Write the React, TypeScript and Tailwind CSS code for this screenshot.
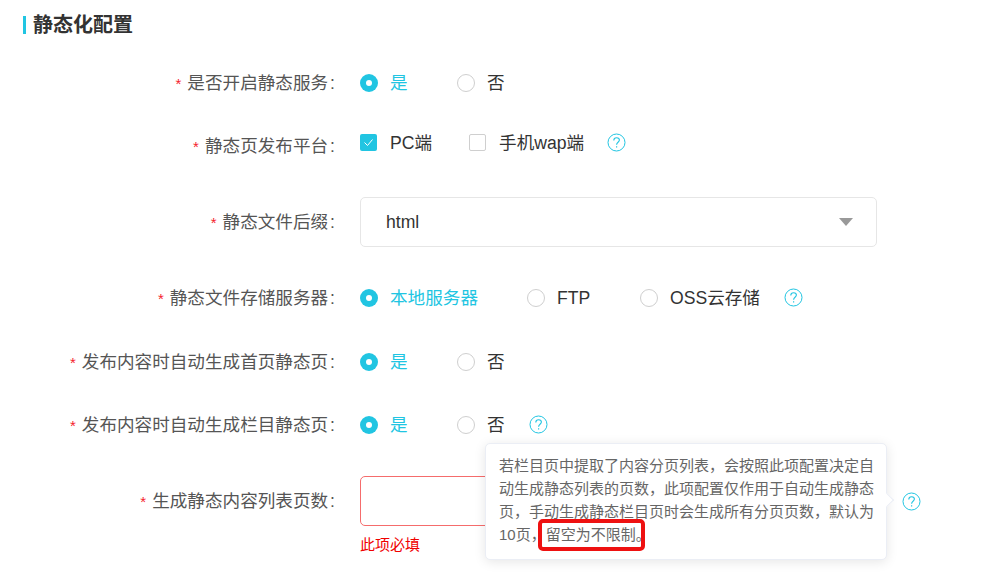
const FONT = "font-['Liberation_Sans','Noto_Sans_CJK_SC',sans-serif]"

function Help({ className = "" }: { className?: string }) {
  return (
    <svg width="19" height="19" viewBox="0 0 19 19" fill="none" stroke="#21c5e2" className={className}>
      <circle cx="9.5" cy="9.5" r="8.5" strokeWidth="1" />
      <path d="M6.8 7.4c0-1.6 1.2-2.7 2.8-2.7s2.8 1 2.8 2.4c0 2.2-2.8 2.2-2.8 4.6" strokeWidth="1.1" />
      <path d="M9.6 13.2v1.3" strokeWidth="1.2" />
    </svg>
  )
}

function Radio({ label, on, mr }: { label: string; on?: boolean; mr: string }) {
  return (
    <div className={`flex items-center ${mr}`}>
      {on ? (
        <span className="w-[18px] h-[18px] rounded-full bg-[#21c5e2] flex items-center justify-center">
          <span className="w-[6px] h-[6px] rounded-full bg-white" />
        </span>
      ) : (
        <span className="w-[18px] h-[18px] rounded-full border border-[#cfcfcf] bg-white" />
      )}
      <span className={`ml-[12px] text-[17.6px] ${on ? "text-[#21c5e2]" : "text-[#333]"}`}>{label}</span>
    </div>
  )
}

function Check({ label, on }: { label: string; on?: boolean }) {
  return (
    <div className="flex items-center">
      {on ? (
        <span className="w-[17px] h-[17px] rounded-[2px] bg-[#21c5e2] flex items-center justify-center">
          <svg width="11" height="9" viewBox="0 0 11 9" fill="none" stroke="white" strokeWidth="1">
            <path d="M1.5 4.5l3 3 5-6" />
          </svg>
        </span>
      ) : (
        <span className="w-[17px] h-[17px] rounded-[2px] border border-[#cfcfcf] bg-white" />
      )}
      <span className="ml-[13px] text-[17.6px] text-[#333]">{label}</span>
    </div>
  )
}

function Row({ label, className, labelClass = "", children }: { label: string; className: string; labelClass?: string; children: React.ReactNode }) {
  return (
    <div className={`flex items-center ${className}`}>
      <label className={`w-[335px] shrink-0 text-right text-[17.6px] text-[#555] whitespace-nowrap ${labelClass}`}>
        <span className="text-[#f5222d] mr-[6px] text-[15px]">*</span>
        {label}
        <span className="ml-[2px]">:</span>
      </label>
      <div className="ml-[25px] flex items-center flex-1">{children}</div>
    </div>
  )
}

export default function App() {
  return (
    <div className={`h-[575px] w-[991px] overflow-hidden bg-white ${FONT}`}>
      <div className="h-[63px] pl-[23px] pt-[16px]">
        <h2 className="border-l-[3px] border-[#21c5e2] pl-[7px] h-[18px] flex items-center text-[20px] font-bold text-[#333]">
          静态化配置
        </h2>
      </div>

      <Row label="是否开启静态服务" className="h-[40px]">
        <Radio label="是" on mr="w-[97px]" />
        <Radio label="否" mr="" />
      </Row>

      <Row label="静态页发布平台" className="h-[40px] mt-[20px]" labelClass="pt-[6px]">
        <Check label="PC端" on />
        <div className="ml-[37px]"><Check label="手机wap端" /></div>
        <Help className="ml-[23px]" />
      </Row>

      <Row label="静态文件后缀" className="h-[50px] mt-[34px]">
        <div className="w-[517px] h-[50px] rounded-[5px] border border-[#e6e6e6] pl-[25px] pr-[23px] flex items-center justify-between">
          <span className="text-[17.6px] text-[#333]">html</span>
          <span className="w-0 h-0 border-x-[7px] border-x-transparent border-t-[8px] border-t-[#999]" />
        </div>
      </Row>

      <Row label="静态文件存储服务器" className="h-[40px] mt-[31px]">
        <Radio label="本地服务器" on mr="w-[167px]" />
        <Radio label="FTP" mr="w-[113px]" />
        <Radio label="OSS云存储" mr="" />
        <Help className="ml-[24px]" />
      </Row>

      <Row label="发布内容时自动生成首页静态页" className="h-[40px] mt-[24px]">
        <Radio label="是" on mr="w-[97px]" />
        <Radio label="否" mr="" />
      </Row>

      <Row label="发布内容时自动生成栏目静态页" className="h-[40px] mt-[23px]">
        <Radio label="是" on mr="w-[97px]" />
        <Radio label="否" mr="" />
        <Help className="ml-[24px]" />
      </Row>

      <Row label="生成静态内容列表页数" className="h-[50px] mt-[31px] relative">
        <div className="w-[517px] h-[50px] rounded-[5px] border border-[#f56c6c] bg-white" />
        <Help className="ml-[25px]" />
        {/* 气泡提示 */}
        <div className="absolute left-[485px] top-[-33px] w-[402px] h-[117px] bg-white rounded-[5px] border border-[#ebeef5] shadow-[0_2px_12px_rgba(0,0,0,0.1)] pl-[13px] pr-[10px] pt-[10px] text-[15px] leading-[23px] text-[#666]">
          <p className="relative">
            若栏目页中提取了内容分页列表，会按照此项配置决定自动生成静态列表的页数，此项配置仅作用于自动生成静态页，手动生成静态栏目页时会生成所有分页页数，默认为10页，
            <span className="relative">
              留空为不限制。
              <span className="absolute left-[-8px] right-[6px] top-[-7px] bottom-[-8px] border-[4px] border-[#ee1111] rounded-[5px]" />
            </span>
          </p>
          <span className="absolute right-[-6px] top-[51px] w-[10px] h-[10px] rotate-45 bg-white border-t border-r border-[#ebeef5]" />
        </div>
      </Row>

      <div className="pl-[360px] mt-[8px] text-[15px] text-[#f00000]">此项必填</div>
    </div>
  )
}
